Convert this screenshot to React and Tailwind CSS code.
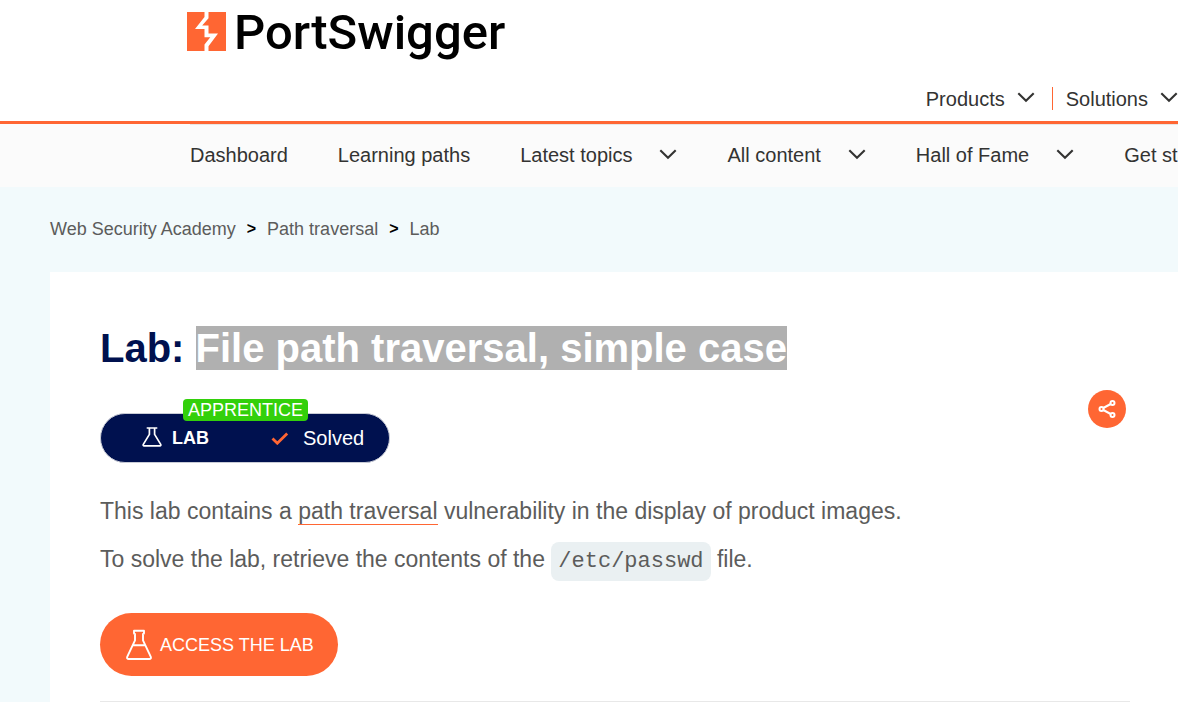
import React from "react";

function Chevron() {
  return (
    <svg className="mb-0.5 h-[11px] w-[18px] shrink-0" viewBox="0 0 18 11" fill="none" stroke="#333332" strokeWidth="2.1" aria-hidden="true">
      <path d="M1.3 1.3 9 8.8l7.7-7.5" />
    </svg>
  );
}

function LogoMark() {
  return (
    <svg className="h-[39px] w-[39px] shrink-0" viewBox="0 0 39 39" aria-hidden="true">
      <path fill="#ff6633" d="M0 0h39v39H0z" />
      <path fill="#fff" d="M17.5 0h4v6.2L15.2 13.500h6.300v8h9.500L21.500 34.300V39h-4v-6.500l5.800-7.200h-5.800v-8.300H8L17.500 5z" />
    </svg>
  );
}

function SmallFlask() {
  return (
    <svg className="mb-0.5 h-5 w-5 shrink-0" viewBox="0 0 20 20" fill="none" stroke="#fff" strokeWidth="1.7" strokeLinejoin="round" aria-hidden="true">
      <path d="M4.700 1h10.600M7.400 1v6.400L1.300 17.400c-.4.800-.1 1.500.8 1.500h15.800c.9 0 1.200-.7.8-1.500L12.600 7.400V1" />
    </svg>
  );
}

function LargeFlask() {
  return (
    <svg className="h-8 w-[26px] shrink-0" viewBox="0 0 26 32" fill="none" stroke="#fff" strokeWidth="1.9" strokeLinejoin="round" strokeLinecap="round" aria-hidden="true">
      <path d="M8 1.700h10v2.500c0 .5-.4.8-1 .8v6.300l7.700 16.400c.6 1.400-.1 2.300-1.400 2.300H2.700c-1.300 0-2-.9-1.400-2.300L9 11.300V5c-.6 0-1-.3-1-.8zM7.200 16.200h11.600" />
    </svg>
  );
}

function Check() {
  return (
    <svg className="h-3.5 w-[18px] shrink-0" viewBox="0 0 18 14" fill="none" stroke="#ff6633" strokeWidth="2.8" aria-hidden="true">
      <path d="M1.500 7.500 6.300 12.200 16.200 2.500" />
    </svg>
  );
}

function ShareIcon() {
  return (
    <svg className="h-5 w-[18px]" viewBox="0 0 18 20" fill="none" stroke="#fff" strokeWidth="2" aria-hidden="true">
      <circle cx="3.500" cy="10" r="2" />
      <circle cx="14.500" cy="4" r="2" />
      <circle cx="14.500" cy="16" r="2" />
      <path d="m5.300 9 7.400-4M5.300 11l7.400 4" />
    </svg>
  );
}

const academyLinks = [
  { label: "Dashboard" },
  { label: "Learning paths" },
  { label: "Latest topics", menu: true },
  { label: "All content", menu: true },
  { label: "Hall of Fame", menu: true },
  { label: "Get started", menu: true },
];

export default function App() {
  return (
    <div className="min-h-screen overflow-hidden bg-[#f2fafc] font-['Liberation_Sans',Arial,sans-serif] text-[#5c5c5b]">
      <header className="border-b-[3px] border-[#ff6633] bg-white">
        <div className="flex h-[76px] items-start pt-3 pl-[187px]">
          <a href="#home" className="flex items-start gap-2">
            <LogoMark />
            <span className="font-[Roboto,sans-serif] text-[49px] leading-[42px] font-medium text-black">PortSwigger</span>
          </a>
        </div>
        <nav aria-label="Main" className="flex h-[45px] items-center justify-end text-xl text-[#333332]">
          <button type="button" className="flex items-center gap-3">Products<Chevron /></button>
          <span className="mr-[13px] ml-[17px] h-[23px] shrink-0 border-l border-[#ff6633]" />
          <button type="button" className="flex items-center gap-3">Solutions<Chevron /></button>
        </nav>
      </header>

      <nav aria-label="Academy" className="overflow-hidden bg-[#fbfbfb] pl-[190px]">
        <ul className="flex h-[63px] gap-[50px] border-t border-[#e8e6e4] pb-0.5 text-xl whitespace-nowrap text-[#333332]">
          {academyLinks.map((item) => (
            <li key={item.label} className="flex shrink-0 items-center">
              {item.menu ? (
                <button type="button" className="flex items-center gap-[27px]">{item.label}<Chevron /></button>
              ) : (
                <a href="#academy">{item.label}</a>
              )}
            </li>
          ))}
        </ul>
      </nav>

      <nav aria-label="Breadcrumb" className="flex h-[85px] items-center gap-[11px] pb-0.5 pl-[50px] text-lg">
        <a href="#academy">Web Security Academy</a>
        <span className="text-base font-bold text-black">&gt;</span>
        <a href="#path-traversal">Path traversal</a>
        <span className="text-base font-bold text-black">&gt;</span>
        <a href="#lab">Lab</a>
      </nav>

      <main className="ml-[50px] bg-white pt-[54px] pr-12 pl-[50px]">
        <h1 className="text-[40px] leading-[44px] font-bold text-[#00114f]">
          Lab: <span className="bg-[#b0b0b0] text-white">File path traversal, simple case</span>
        </h1>

        <div className="mt-5 flex items-start justify-between">
          <div className="relative mt-[23px] flex h-[50px] w-[290px] items-center rounded-full border border-[#c9ccd6] bg-[#00114f] pl-[41px] text-white">
            <SmallFlask />
            <span className="ml-2.5 text-lg font-bold">LAB</span>
            <span className="absolute -top-[15px] left-[82px] rounded bg-[#33d00b] px-[5px] text-lg leading-[22px]">APPRENTICE</span>
            <span className="ml-[62px] flex items-center gap-3.5 text-xl"><Check />Solved</span>
          </div>
          <button type="button" aria-label="Share" className="mr-1 flex size-[38px] items-center justify-center rounded-full bg-[#ff6633]">
            <ShareIcon />
          </button>
        </div>

        <p className="mt-[33px] text-[23px] leading-[30px]">
          This lab contains a <a href="#path-traversal" className="border-b border-[#ff6633]">path traversal</a> vulnerability in the display of product images.
        </p>
        <p className="mt-[18px] text-[23px] leading-[30px]">
          To solve the lab, retrieve the contents of the{" "}
          <code className="rounded-lg bg-[#eaf0f2] px-[7px] py-[7px] font-['Liberation_Mono','Courier_New',monospace] text-[22px]">/etc/passwd</code> file.
        </p>

        <button type="button" className="mt-9 flex h-[63px] items-center gap-2 rounded-full bg-[#ff6633] pr-6 pl-[26px] text-lg text-white">
          <LargeFlask />
          ACCESS THE LAB
        </button>
        <hr className="mt-[25px] border-[#e8e8e8]" />
      </main>
    </div>
  );
}
